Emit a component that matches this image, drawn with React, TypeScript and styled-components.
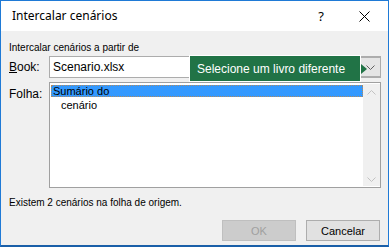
import React from 'react';
import styled, { createGlobalStyle } from 'styled-components';

const GlobalStyle = createGlobalStyle`
  html, body {
    margin: 0;
    padding: 0;
    background: #ffffff;
  }
  * {
    box-sizing: border-box;
  }
`;

const Window = styled.div`
  width: 389px;
  height: 247px;
  display: flex;
  flex-direction: column;
  border: 1px solid #1f7ad6;
  border-bottom: 2px solid #1a5fa8;
  background-color: #f0f0f0;
  font-family: 'Liberation Sans', Arial, sans-serif;
  color: #000;
  overflow: hidden;
`;

const TitleBar = styled.div`
  height: 30px;
  flex: none;
  display: flex;
  align-items: center;
  background-color: #ffffff;
  padding-left: 11px;
`;

const Title = styled.div`
  flex: 1;
  font-family: 'Noto Sans', 'Liberation Sans', sans-serif;
  font-size: 12px;
  color: #000;
  padding-bottom: 1px;
`;

const TitleButton = styled.div<{ $w: number; $mr?: number }>`
  width: ${p => p.$w}px;
  height: 30px;
  margin-right: ${p => p.$mr || 0}px;
  display: flex;
  align-items: center;
  justify-content: center;
  font-family: 'Noto Sans', sans-serif;
  font-size: 13px;
  color: #000;
`;

const Body = styled.div`
  flex: 1;
  display: flex;
  flex-direction: column;
  padding: 11px 7px 0 8px;
`;

const SourceLabel = styled.div`
  font-size: 10px;
  line-height: 12px;
  height: 12px;
`;

const FieldRow = styled.div<{ $mt: number }>`
  position: relative;
  display: flex;
  margin-top: ${p => p.$mt}px;
`;

const FieldLabel = styled.div<{ $pt: number }>`
  width: 40px;
  flex: none;
  font-size: 12px;
  padding-top: ${p => p.$pt}px;
  color: #000;

  u {
    text-decoration: underline;
    text-underline-offset: 1px;
  }
`;

const Combo = styled.div`
  flex: 1;
  height: 22px;
  display: flex;
  background: #ffffff;
  border: 1px solid #acacac;
`;

const ComboText = styled.div`
  flex: 1;
  font-size: 12px;
  line-height: 20px;
  padding-left: 3px;
`;

const ComboButton = styled.div`
  width: 20px;
  height: 20px;
  display: flex;
  align-items: center;
  justify-content: center;
  background: #e5e5e5;
  border: 1px solid #adadad;
  border-right: none;
`;

const Tooltip = styled.div`
  position: absolute;
  left: 180px;
  top: -1px;
  width: 172px;
  height: 27px;
  display: flex;
  align-items: center;
  padding-left: 7px;
  background: #217346;
  border: 1px solid #ffffff;
  color: #ffffff;
  font-size: 12px;

  &::after {
    content: '';
    position: absolute;
    right: -7px;
    top: 8px;
    border-top: 5px solid transparent;
    border-bottom: 5px solid transparent;
    border-left: 6px solid #217346;
  }
`;

const ListBox = styled.div`
  flex: 1;
  height: 106px;
  display: flex;
  background: #ffffff;
  border: 1px solid #a0a0a0;
  padding: 1px 0 1px 1px;
`;

const ListItems = styled.div`
  flex: 1;
  font-size: 11px;
`;

const ListItem = styled.div<{ $selected?: boolean; $indent?: number }>`
  height: 12px;
  line-height: 12px;
  padding-left: ${p => 2 + (p.$indent || 0)}px;
  margin-top: ${p => (p.$selected ? 1 : 2)}px;
  background: ${p => (p.$selected ? '#3399ff' : 'transparent')};
  outline: ${p => (p.$selected ? '1px dotted #b08a60' : 'none')};
  outline-offset: -1px;
  color: #000;
`;

const ScrollBar = styled.div`
  width: 17px;
  display: flex;
  flex-direction: column;
  justify-content: space-between;
  align-items: center;
  background: #f0f0f0;
  padding: 6px 0 4px;
`;

const StatusText = styled.div`
  margin-top: 9px;
  font-size: 10px;
  line-height: 12px;
`;

const ButtonRow = styled.div`
  display: flex;
  justify-content: flex-end;
  gap: 10px;
  margin-top: 11px;
  padding-right: 1px;
`;

const DialogButton = styled.div<{ $disabled?: boolean }>`
  width: 74px;
  height: 21px;
  display: flex;
  align-items: center;
  justify-content: center;
  font-size: 11px;
  background: ${p => (p.$disabled ? '#cccccc' : '#e1e1e1')};
  border: 1px solid ${p => (p.$disabled ? '#bfbfbf' : '#adadad')};
  color: ${p => (p.$disabled ? '#a0a0a0' : '#000000')};
`;

const Chevron = ({ up, color }: { up?: boolean; color: string }) => (
  <svg width="9" height="5" viewBox="0 0 9 5">
    <path
      d={up ? 'M0.5 4.5 L4.5 0.5 L8.5 4.5' : 'M0.5 0.5 L4.5 4.5 L8.5 0.5'}
      fill="none"
      stroke={color}
      strokeWidth="1"
    />
  </svg>
);

const CloseIcon = () => (
  <svg width="11" height="11" viewBox="0 0 11 11">
    <path d="M0.5 0.5 L10.5 10.5 M10.5 0.5 L0.5 10.5" stroke="#000" strokeWidth="1" />
  </svg>
);

const App: React.FC = () => {
  return (
    <>
      <GlobalStyle />
      <Window>
        <TitleBar>
          <Title>Intercalar cenários</Title>
          <TitleButton $w={22} $mr={8}>?</TitleButton>
          <TitleButton $w={48}>
            <CloseIcon />
          </TitleButton>
        </TitleBar>
        <Body>
          <SourceLabel>Intercalar cenários a partir de</SourceLabel>
          <FieldRow $mt={2}>
            <FieldLabel $pt={4}>
              <u>B</u>ook:
            </FieldLabel>
            <Combo>
              <ComboText>Scenario.xlsx</ComboText>
              <ComboButton>
                <Chevron color="#606060" />
              </ComboButton>
            </Combo>
            <Tooltip>Selecione um livro diferente</Tooltip>
          </FieldRow>
          <FieldRow $mt={4}>
            <FieldLabel $pt={5}>Folha:</FieldLabel>
            <ListBox>
              <ListItems>
                <ListItem $selected>Sumário do</ListItem>
                <ListItem $indent={8}>cenário</ListItem>
              </ListItems>
              <ScrollBar>
                <Chevron up color="#c2c2c2" />
                <Chevron color="#c2c2c2" />
              </ScrollBar>
            </ListBox>
          </FieldRow>
          <StatusText>Existem 2 cenários na folha de origem.</StatusText>
          <ButtonRow>
            <DialogButton $disabled>OK</DialogButton>
            <DialogButton>Cancelar</DialogButton>
          </ButtonRow>
        </Body>
      </Window>
    </>
  );
};

export default App;
